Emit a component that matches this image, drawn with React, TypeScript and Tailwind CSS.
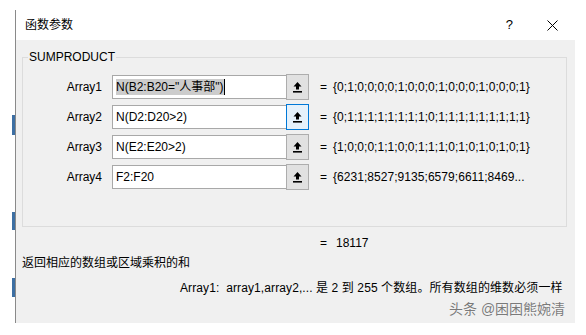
import React from 'react';

const font = "font-['Liberation_Sans','Noto_Sans_CJK_SC',sans-serif]";

// Petite icône "réduire la boîte de dialogue" (flèche vers le haut + barre)
const CollapseIcon: React.FC = () => (
  <svg width="9" height="11" viewBox="0 0 9 11">
    <polygon points="4.5,0 8.5,4.5 6,4.5 6,7.5 3,7.5 3,4.5 0.5,4.5" fill="#000" />
    <rect x="0" y="9" width="9" height="1.6" fill="#000" />
  </svg>
);

const rows = [
  { label: 'Array1', value: '{0;1;0;0;0;0;1;0;0;0;1;0;0;0;1;0;0;0;1}', input: 'N(B2:B20="人事部")', selected: true },
  { label: 'Array2', value: '{0;1;1;1;1;1;1;1;1;0;1;1;1;1;1;1;1;1;1}', input: 'N(D2:D20>2)', focused: true },
  { label: 'Array3', value: '{1;0;0;0;1;1;0;0;1;1;1;0;1;0;1;0;1;0;1}', input: 'N(E2:E20>2)' },
  { label: 'Array4', value: '{6231;8527;9135;6579;6611;8469...', input: 'F2:F20' },
];

const ArgRow: React.FC<{ label: string; value: string; input: string; selected?: boolean; focused?: boolean }> = ({
  label,
  value,
  input,
  selected,
  focused,
}) => (
  <div className="flex items-center h-[26px]">
    <div className="w-[79px] text-right text-[12px] leading-4 text-black">{label}</div>
    <div className="ml-[10px] w-[175px] h-[24px] bg-white border border-[#a8a8a8] flex items-center pl-[3px] text-[12px] leading-4 text-black">
      {selected ? (
        <>
          <span className="bg-[#cccccc] h-[16px]">{input}</span>
          <span className="w-px h-[16px] bg-black" />
        </>
      ) : (
        <span>{input}</span>
      )}
    </div>
    <div
      className={
        focused
          ? 'w-[23px] h-[26px] -ml-px border border-[#0078d7] bg-[#e5f1fb] flex items-center justify-center'
          : 'w-[23px] h-[26px] -ml-px border border-[#adadad] bg-[#e1e1e1] flex items-center justify-center'
      }
    >
      <CollapseIcon />
    </div>
    <div className="ml-[11px] w-[13px] text-[12px] leading-4 text-black">=</div>
    <div className="text-[12px] leading-4 text-black whitespace-nowrap tracking-[0.05px]">{value}</div>
  </div>
);

export default function App() {
  return (
    <div className={`w-[586px] h-[335px] bg-white flex overflow-hidden relative ${font}`}>
      {/* Bord de la feuille Excel derrière */}
      <div className="w-[12px]" />
      <div className="w-[3px] flex flex-col">
        <div className="h-[115px]" />
        <div className="h-[20px] bg-[#3d6fa3]" />
        <div className="h-[77px]" />
        <div className="h-[18px] bg-[#3d6fa3]" />
        <div className="h-[48px]" />
        <div className="h-[19px] bg-[#3d6fa3]" />
      </div>
      <div className="w-px mt-[10px] h-[313px] bg-[#8a8a8a]" />

      {/* Boîte de dialogue */}
      <div className="w-[559px] flex flex-col">
        <div className="h-[40px] bg-white flex items-center pt-[10px] pl-[9px] pr-[17px]">
          <span className="text-[12px] leading-4 text-black">函数参数</span>
          <span className="ml-auto text-[13px] leading-4 text-black">?</span>
          <svg className="ml-[34px]" width="11" height="11" viewBox="0 0 11 11">
            <path d="M0.5 0.5 L10.5 10.5 M10.5 0.5 L0.5 10.5" stroke="#000" strokeWidth="1" />
          </svg>
        </div>

        <div className="h-[283px] bg-[#f0f0f0] pl-[6px] pr-[8px]">
          <fieldset className="mt-[9px] border border-[#dcdcdc] pt-[9px] pb-[36px] flex flex-col gap-[4px]">
            <legend className="ml-[5px] px-px text-[12px] leading-4 text-black">SUMPRODUCT</legend>
            {rows.map((r) => (
              <ArgRow key={r.label} {...r} />
            ))}
          </fieldset>

          <div className="mt-[8px] pl-[298px] flex text-[12px] leading-4 text-black">
            <span className="w-[16px]">=</span>
            <span>18117</span>
          </div>
          <div className="mt-[4px] text-[12px] leading-4 text-black">返回相应的数组或区域乘积的和</div>
          <div className="mt-[9px] pl-[158px] text-[12px] leading-4 text-black whitespace-nowrap tracking-[0.1px]">
            Array1:&nbsp;&nbsp;array1,array2,... 是 2 到 255 个数组。所有数组的维数必须一样
          </div>
        </div>
      </div>

      {/* Filigrane */}
      <div className="absolute left-[449px] top-[301px] text-[14px] leading-4 text-[#7a7a7a] whitespace-nowrap [text-shadow:0_0_1px_#ffffff]">
        头条 @困困熊婉清
      </div>
    </div>
  );
}
